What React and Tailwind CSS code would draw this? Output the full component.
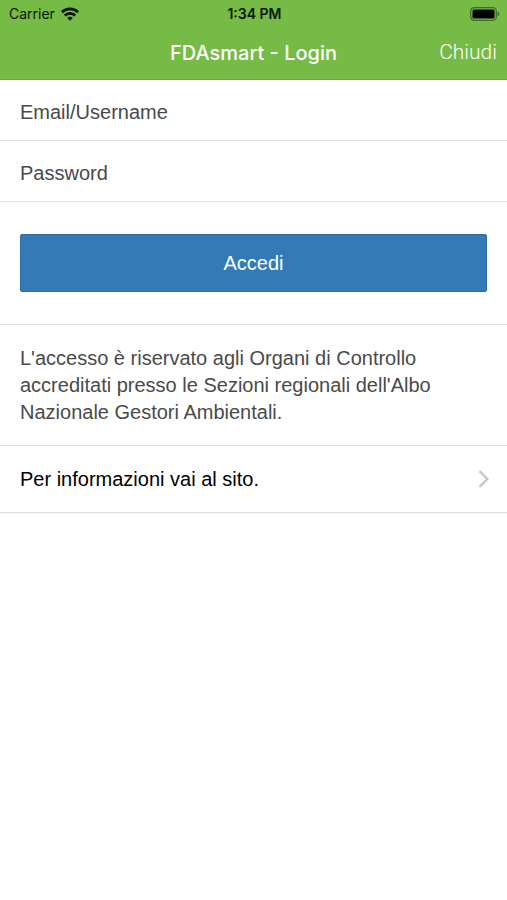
// Login screen: status bar, title bar, credentials form and info links

function WifiIcon() {
  return (
    <svg viewBox="0 0 18 14" className="h-[14px] w-[18px]" fill="none" stroke="#0b1305" strokeWidth="2.7" aria-hidden="true">
      <path d="M0.9 5.2a11.6 11.6 0 0 1 16.2 0" />
      <path d="M3.8 8.5a7.4 7.4 0 0 1 10.4 0" />
      <path d="M9 13.8 6.2 11a3.9 3.9 0 0 1 5.6 0z" fill="#0b1305" stroke="none" />
    </svg>
  )
}

function BatteryIcon() {
  return (
    <svg viewBox="0 0 30 14" className="h-[14px] w-[30px]" aria-hidden="true">
      <rect x="0.7" y="0.7" width="25.6" height="12.6" rx="3.6" fill="none" stroke="#3f6b27" strokeWidth="1.3" />
      <rect x="2.5" y="2.5" width="22" height="9" rx="1.5" fill="#000" />
      <path d="M27.6 4.8c1.1.3 1.8 1.2 1.8 2.2s-.7 1.9-1.8 2.2z" fill="#3f6b27" />
    </svg>
  )
}

function StatusBar() {
  return (
    <div className="grid grid-cols-3 items-center h-[27px] pl-[9px] pr-[7px] text-[#0b1305]">
      <div className="flex items-center gap-[6px]">
        <span className="font-[Inter,sans-serif] text-[14px]">Carrier</span>
        <WifiIcon />
      </div>
      <span className="text-center font-[Inter,sans-serif] text-[14px] font-semibold">1:34 PM</span>
      <div className="flex justify-end">
        <BatteryIcon />
      </div>
    </div>
  )
}

function Field({ id, type, label }) {
  return (
    <div className="flex items-center h-[61px] px-5 pt-1 gap-4 border-b border-[#dedede] text-[#4a4a4a]">
      <label htmlFor={id}>{label}</label>
      <input id={id} type={type} className="flex-1 min-w-0 h-10 outline-none" />
    </div>
  )
}

function App() {
  return (
    <div className="min-h-screen bg-white font-['Liberation_Sans',Arial,sans-serif] text-[20px]">
      <header className="bg-[#75bb46] border-b border-[#6aa544]">
        <StatusBar />
        <div className="grid grid-cols-[1fr_auto_1fr] items-center h-[52px] px-[10px] text-white">
          <span />
          <h1 className="font-[Inter,sans-serif] font-medium">FDAsmart - Login</h1>
          <button type="button" className="justify-self-end font-[Roboto,sans-serif] text-[21px] font-light">Chiudi</button>
        </div>
      </header>

      <main>
        <form onSubmit={(e) => e.preventDefault()}>
          <Field id="username" type="text" label="Email/Username" />
          <Field id="password" type="password" label="Password" />
          <div className="px-5 py-8 border-b border-[#dedede]">
            <button
              type="submit"
              className="block w-full h-[58px] rounded-[2px] border border-[#2b6ca6] bg-[#337ab7] text-white"
            >
              Accedi
            </button>
          </div>
        </form>

        <p className="px-5 pt-5 pb-[19px] leading-[27px] text-[#4a4a4a] border-b border-[#dedede]">
          L'accesso è riservato agli Organi di Controllo accreditati presso le Sezioni regionali dell'Albo Nazionale Gestori Ambientali.
        </p>

        <a href="#info" className="flex items-center justify-between h-[67px] pl-5 pr-[18px] text-black border-b border-[#dedede]">
          <span>Per informazioni vai al sito.</span>
          <svg viewBox="0 0 11 18" className="h-[18px] w-[11px]" fill="none" stroke="#c7c7cc" strokeWidth="2.4" aria-hidden="true">
            <path d="M1.5 1.2 9.3 9 1.5 16.8" />
          </svg>
        </a>
      </main>
    </div>
  )
}

export default App
